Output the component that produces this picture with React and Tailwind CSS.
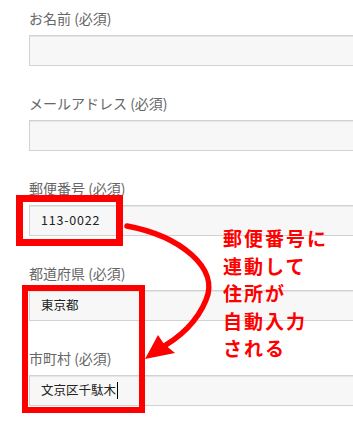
import React from "react";

const font = { fontFamily: '"Noto Sans CJK JP", "Noto Sans", sans-serif' };

function Field({ label, value, cursor, digits }) {
  return (
    <div className="flex flex-col">
      <div className="h-5 leading-5 text-[14px] text-[#666] mb-[7px] whitespace-nowrap">{label}</div>
      <div
        className={
          "h-[31px] w-[340px] border border-[#d2d2d2] bg-[#f7f7f7] shadow-[inset_0_1px_0_#e6e6e6] flex items-center pl-[11px] text-[12.5px] text-[#222] " +
          (digits ? "tracking-[0.8px]" : "tracking-[0px]")
        }
      >
        {value}
        {cursor && <span className="inline-block w-px h-[17px] bg-black ml-px" />}
      </div>
    </div>
  );
}

export default function App() {
  return (
    <div className="relative w-full h-[427px] bg-white overflow-hidden" style={font}>
      <div className="flex flex-col gap-[27px] pl-[29px] pt-[8px]">
        <Field label="お名前 (必須)" value="" />
        <Field label="メールアドレス (必須)" value="" />
        <Field label="郵便番号 (必須)" value="113-0022" digits />
        <Field label="都道府県 (必須)" value="東京都" />
        <Field label="市町村 (必須)" value="文京区千駄木" cursor />
      </div>

      <div className="absolute left-[16px] top-[195px] w-[107px] h-[51px] border-[7px] border-[#ff0000]" />
      <div className="absolute left-[22px] top-[285px] w-[123px] h-[128px] border-[6px] border-[#ff0000]" />

      <svg className="absolute left-0 top-0" width="353" height="427" viewBox="0 0 353 427">
        <path
          d="M127 226 C 180 236, 220 268, 206 300 C 197 322, 180 338, 157 350"
          fill="none"
          stroke="#ff0000"
          strokeWidth="5.5"
          strokeLinecap="round"
        />
        <polygon points="145,359 158,335 164,344 175,353" fill="#ff0000" />
      </svg>

      <div className="absolute left-[223px] top-[224px] text-[19px] leading-[27.5px] font-bold text-[#ff0000] tracking-[2px]">
        <div>郵便番号に</div>
        <div>連動して</div>
        <div>住所が</div>
        <div>自動入力</div>
        <div>される</div>
      </div>
    </div>
  );
}
